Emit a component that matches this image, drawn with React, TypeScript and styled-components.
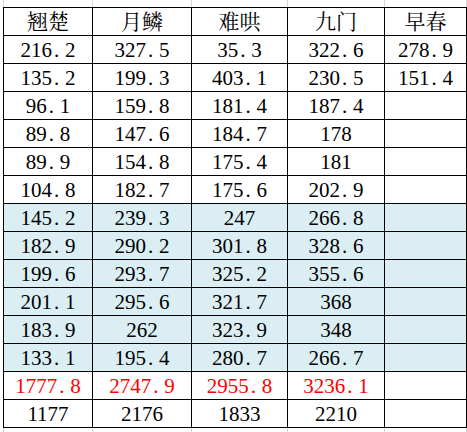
import React from "react";
import styled, { createGlobalStyle } from "styled-components";

const Global = createGlobalStyle`
  html, body { margin: 0; padding: 0; background: #ffffff; }
  body { width: 467px; height: 432px; overflow: hidden; }
`;

const COLS = "89px 99px 96px 97px 82px";

const Page = styled.div`
  padding-left: 3px;
  font-family: "Liberation Serif", "Noto Serif CJK SC", "Noto Sans CJK SC", serif;
`;

const Ghost = styled.div<{ $h: number }>`
  display: grid;
  grid-template-columns: ${COLS};
  height: ${(p) => p.$h}px;
  border-left: 1px solid #d4d4d4;
`;

const GhostCell = styled.div`
  border-right: 1px solid #d4d4d4;
`;

const Grid = styled.div`
  display: grid;
  grid-template-columns: ${COLS};
  grid-auto-rows: 28px;
  border-left: 1px solid #000;
  border-top: 1px solid #000;
`;

const Cell = styled.div<{ $bg?: string; $red?: boolean }>`
  box-sizing: border-box;
  border-right: 1px solid #000;
  border-bottom: 1px solid #000;
  background: ${(p) => p.$bg || "#ffffff"};
  color: ${(p) => (p.$red ? "#ff0000" : "#000000")};
  display: flex;
  align-items: center;
  justify-content: center;
  font-size: 21px;
  line-height: 1;
  padding-top: 1px;
  white-space: nowrap;
`;

const Dot = styled.span`
  display: inline-block;
  width: 13px;
  text-align: left;
  padding-left: 2px;
  box-sizing: border-box;
`;

const header = ["翘楚", "月鳞", "难哄", "九门", "早春"];

const rows: string[][] = [
  ["216.2", "327.5", "35.3", "322.6", "278.9"],
  ["135.2", "199.3", "403.1", "230.5", "151.4"],
  ["96.1", "159.8", "181.4", "187.4", ""],
  ["89.8", "147.6", "184.7", "178", ""],
  ["89.9", "154.8", "175.4", "181", ""],
  ["104.8", "182.7", "175.6", "202.9", ""],
  ["145.2", "239.3", "247", "266.8", ""],
  ["182.9", "290.2", "301.8", "328.6", ""],
  ["199.6", "293.7", "325.2", "355.6", ""],
  ["201.1", "295.6", "321.7", "368", ""],
  ["183.9", "262", "323.9", "348", ""],
  ["133.1", "195.4", "280.7", "266.7", ""],
  ["1777.8", "2747.9", "2955.8", "3236.1", ""],
  ["1177", "2176", "1833", "2210", ""],
];

const Num: React.FC<{ v: string }> = ({ v }) => {
  if (!v.includes(".")) return <>{v}</>;
  const [a, b] = v.split(".");
  return (
    <>
      {a}
      <Dot>.</Dot>
      {b}
    </>
  );
};

export default function App() {
  return (
    <Page>
      <Global />
      <Ghost $h={7}>
        {header.map((_, i) => (
          <GhostCell key={i} />
        ))}
      </Ghost>
      <Grid>
        {header.map((h) => (
          <Cell key={h}>{h}</Cell>
        ))}
        {rows.map((r, ri) =>
          r.map((v, ci) => (
            <Cell
              key={`${ri}-${ci}`}
              $bg={ri >= 6 && ri <= 11 ? "#daeef3" : undefined}
              $red={ri === 12}
            >
              <Num v={v} />
            </Cell>
          ))
        )}
      </Grid>
      <Ghost $h={8}>
        {header.map((_, i) => (
          <GhostCell key={i} />
        ))}
      </Ghost>
    </Page>
  );
}
